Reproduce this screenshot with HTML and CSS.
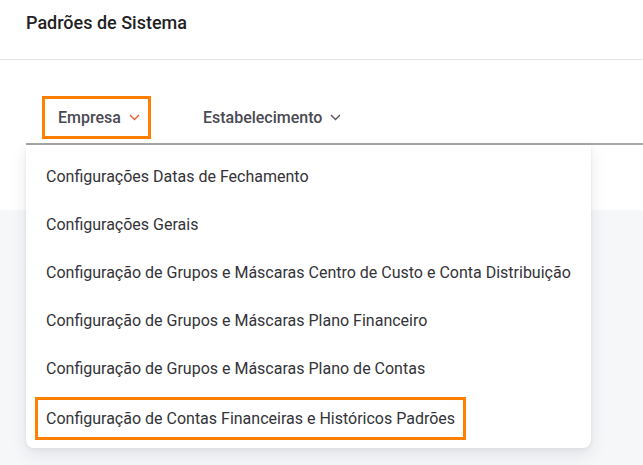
FILE: index.html
```html
<!DOCTYPE html>
<html lang="pt-BR">
<head>
<meta charset="utf-8">
<title>Padrões de Sistema</title>
<link rel="stylesheet" href="styles.css">
</head>
<body>
<header class="header">
  <h1 class="title">Padrões de Sistema</h1>
</header>
<section class="tabs-area">
  <nav class="tabbar">
    <div class="tab tab-active">
      <span class="tab-label">Empresa</span>
      <svg class="chev chev-active" width="11" height="7" viewBox="0 0 11 7"><path d="M1 1l4.5 4.5L10 1" fill="none" stroke="currentColor" stroke-width="1.4"/></svg>
    </div>
    <div class="tab">
      <span class="tab-label">Estabelecimento</span>
      <svg class="chev" width="11" height="7" viewBox="0 0 11 7"><path d="M1 1l4.5 4.5L10 1" fill="none" stroke="currentColor" stroke-width="1.4"/></svg>
    </div>
  </nav>
  <ul class="menu">
    <li class="menu-item">Configurações Datas de Fechamento</li>
    <li class="menu-item">Configurações Gerais</li>
    <li class="menu-item">Configuração de Grupos e Máscaras Centro de Custo e Conta Distribuição</li>
    <li class="menu-item">Configuração de Grupos e Máscaras Plano Financeiro</li>
    <li class="menu-item">Configuração de Grupos e Máscaras Plano de Contas</li>
    <li class="menu-item"><span class="highlight">Configuração de Contas Financeiras e Históricos Padrões</span></li>
  </ul>
</section>
</body>
</html>
```

FILE: styles.css
```css
html, body {
  margin: 0;
  padding: 0;
}
body {
  background: #f6f7f9;
  font-family: Roboto, "Liberation Sans", Arial, sans-serif;
  width: 643px;
  height: 465px;
  overflow: hidden;
}
.header {
  background: #fff;
  height: 59px;
  border-bottom: 1px solid #e2e2e2;
  box-sizing: content-box;
  display: flex;
  align-items: center;
  padding-left: 26px;
}
.title {
  margin: 0 0 14px 0;
  font-size: 18px;
  font-weight: 500;
  color: #1f1f24;
}
.tabs-area {
  position: relative;
  background: #fff;
  height: 150px;
}
.tabbar {
  margin-left: 26px;
  padding-top: 37px;
  display: flex;
  align-items: center;
  gap: 52px;
  height: 46px;
  box-sizing: content-box;
  border-bottom: 2px solid #a7a7a7;
}
.tab {
  display: flex;
  align-items: center;
  gap: 8px;
  height: 43px;
  box-sizing: border-box;
  color: #4a4a52;
  font-size: 16px;
  font-weight: 500;
  position: relative;
  top: -3px;
}
.tab-active {
  border: 3px solid #ff8000;
  padding: 0 8px 0 13px;
  margin-left: 16px;
}
.chev {
  color: #555;
  margin-top: 1px;
}
.chev-active {
  color: #ee5b2f;
}
.menu {
  position: absolute;
  top: 85px;
  left: 26px;
  width: 565px;
  margin: 0;
  padding: 7px 0 8px 0;
  list-style: none;
  background: #fff;
  border-radius: 0 0 8px 8px;
  box-shadow: 0 6px 16px rgba(30, 40, 60, 0.10), 0 1px 4px rgba(30, 40, 60, 0.06);
}
.menu-item {
  height: 48px;
  display: flex;
  align-items: center;
  padding-left: 20px;
  font-size: 16px;
  color: #333338;
  white-space: nowrap;
}
.highlight {
  display: inline-flex;
  align-items: center;
  height: 43px;
  box-sizing: border-box;
  margin-left: -11px;
  margin-top: 5px;
  padding: 0 8px;
  border: 3px solid #ff8000;
}
```
